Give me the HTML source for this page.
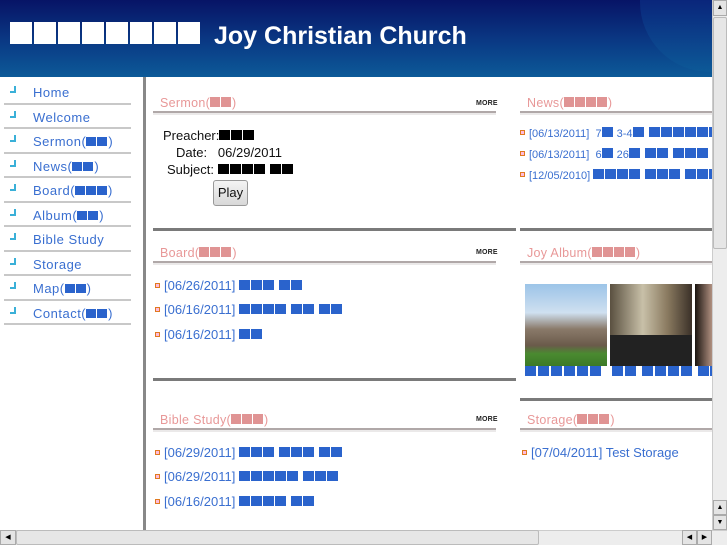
<!DOCTYPE html>
<html><head><meta charset="utf-8"><style>
*{margin:0;padding:0;box-sizing:border-box}
body{width:727px;height:545px;overflow:hidden;position:relative;background:#fff;font-family:"Liberation Sans",sans-serif}
.a{position:absolute}
i{display:inline-block;font-style:normal;vertical-align:baseline}
.b{width:11px;height:10px;background:#2a63cc;margin-right:1px}
.bs{width:10px;height:9px;background:#2a63cc;margin-right:1px}
.p{width:10px;height:10px;background:#e09494;margin-right:1px}
.k{width:11px;height:10px;background:#000;margin-right:1px}
.w{width:22px;height:22px;background:#fff;margin-right:2px}
.sp{width:4px}
#hdr{left:0;top:0;width:712px;height:77px;background:linear-gradient(#071466 0%,#0a3a85 55%,#0c5a98 100%)}
#moon{left:640px;top:0;width:72px;height:72px;background:linear-gradient(#0a2a80,#0d5a98);border-radius:0 0 0 70px;opacity:.8}
.nav{left:4px;width:127px;height:24.5px;border-bottom:2px solid #c8c8c8;font-size:13px;color:#3a6fd0;letter-spacing:.5px}
.nav span.ic{position:absolute;left:6px;top:6px;width:6px;height:7px;border-right:2px solid #3ab0d8;border-bottom:2px solid #3ab0d8}
.nav span.t{position:absolute;left:29px;top:5px}
.hd{font-size:12.5px;color:#e89898;letter-spacing:.3px}
.ln{height:4px;border-top:2px solid #b0a8a8;background:#ebe9e9}
.more{font-size:7px;font-weight:bold;color:#222;letter-spacing:.2px}
.sep{height:3px;background:#7a7a7a}
.it{font-size:13px;color:#3a6fd0;white-space:nowrap}
.its{font-size:11px;color:#3a6fd0;white-space:nowrap}
.bul{display:inline-block;width:5px;height:5px;border:1px solid #e07a20;background:#fbd;margin-right:4px;vertical-align:2px}
</style></head><body>
<div class="a" id="hdr"></div>
<div class="a" id="moon"></div>
<div class="a" style="left:10px;top:22px;white-space:nowrap"><i class="w"></i><i class="w"></i><i class="w"></i><i class="w"></i><i class="w"></i><i class="w"></i><i class="w"></i><i class="w"></i></div>
<div class="a" style="left:214px;top:22px;color:#fff;font-size:25px;font-weight:bold;white-space:nowrap">Joy Christian Church</div>

<div class="a nav" style="top:80px"><span class="ic"></span><span class="t">Home</span></div>
<div class="a nav" style="top:104.5px"><span class="ic"></span><span class="t">Welcome</span></div>
<div class="a nav" style="top:129px"><span class="ic"></span><span class="t">Sermon(<i class="bs"></i><i class="bs"></i>)</span></div>
<div class="a nav" style="top:153.5px"><span class="ic"></span><span class="t">News(<i class="bs"></i><i class="bs"></i>)</span></div>
<div class="a nav" style="top:178px"><span class="ic"></span><span class="t">Board(<i class="bs"></i><i class="bs"></i><i class="bs"></i>)</span></div>
<div class="a nav" style="top:202.5px"><span class="ic"></span><span class="t">Album(<i class="bs"></i><i class="bs"></i>)</span></div>
<div class="a nav" style="top:227px"><span class="ic"></span><span class="t">Bible Study</span></div>
<div class="a nav" style="top:251.5px"><span class="ic"></span><span class="t">Storage</span></div>
<div class="a nav" style="top:276px"><span class="ic"></span><span class="t">Map(<i class="bs"></i><i class="bs"></i>)</span></div>
<div class="a nav" style="top:300.5px"><span class="ic"></span><span class="t">Contact(<i class="bs"></i><i class="bs"></i>)</span></div>

<div class="a" style="left:143px;top:77px;width:3px;height:453px;background:#888"></div>

<div class="a hd" style="left:160px;top:96px">Sermon(<i class="p"></i><i class="p"></i>)</div>
<div class="a more" style="left:476px;top:100px">MORE</div>
<div class="a ln" style="left:153px;top:111px;width:343px"></div>
<div class="a" style="left:150px;top:127px;font-size:13px;color:#111;line-height:17px">
<div style="position:absolute;left:13px;top:0;white-space:nowrap">Preacher:<i class="k"></i><i class="k"></i><i class="k"></i></div>
<div style="position:absolute;left:26px;top:17px;white-space:nowrap">Date:&nbsp;&nbsp; 06/29/2011</div>
<div style="position:absolute;left:17px;top:34px;white-space:nowrap">Subject:&nbsp;<i class="k"></i><i class="k"></i><i class="k"></i><i class="k"></i><i class="sp"></i><i class="k"></i><i class="k"></i></div>
</div>
<div class="a" style="left:213px;top:180px;width:35px;height:26px;border:1px solid #999;border-radius:3px;background:linear-gradient(#f4f4f4,#d8d8d8);font-size:13px;text-align:center;line-height:24px;color:#111">Play</div>
<div class="a sep" style="left:153px;top:228px;width:363px"></div>

<div class="a hd" style="left:527px;top:96px">News(<i class="p"></i><i class="p"></i><i class="p"></i><i class="p"></i>)</div>
<div class="a ln" style="left:520px;top:111px;width:192px"></div>
<div class="a its" style="left:520px;top:127px"><span class="bul"></span>[06/13/2011]&nbsp; 7<i class="b"></i> 3-4<i class="b"></i><i class="sp"></i><i class="b"></i><i class="b"></i><i class="b"></i><i class="b"></i><i class="b"></i><i class="b"></i></div>
<div class="a its" style="left:520px;top:148px"><span class="bul"></span>[06/13/2011]&nbsp; 6<i class="b"></i> 26<i class="b"></i><i class="sp"></i><i class="b"></i><i class="b"></i><i class="sp"></i><i class="b"></i><i class="b"></i><i class="b"></i></div>
<div class="a its" style="left:520px;top:169px;width:192px;overflow:hidden"><span class="bul"></span>[12/05/2010]&nbsp;<i class="b"></i><i class="b"></i><i class="b"></i><i class="b"></i><i class="sp"></i><i class="b"></i><i class="b"></i><i class="b"></i><i class="sp"></i><i class="b"></i><i class="b"></i><i class="b"></i><i class="b"></i></div>
<div class="a sep" style="left:520px;top:228px;width:192px"></div>

<div class="a hd" style="left:160px;top:246px">Board(<i class="p"></i><i class="p"></i><i class="p"></i>)</div>
<div class="a more" style="left:476px;top:249px">MORE</div>
<div class="a ln" style="left:153px;top:261px;width:343px"></div>
<div class="a it" style="left:155px;top:278px"><span class="bul"></span>[06/26/2011] <i class="b"></i><i class="b"></i><i class="b"></i><i class="sp"></i><i class="b"></i><i class="b"></i></div>
<div class="a it" style="left:155px;top:302px"><span class="bul"></span>[06/16/2011] <i class="b"></i><i class="b"></i><i class="b"></i><i class="b"></i><i class="sp"></i><i class="b"></i><i class="b"></i><i class="sp"></i><i class="b"></i><i class="b"></i></div>
<div class="a it" style="left:155px;top:327px"><span class="bul"></span>[06/16/2011] <i class="b"></i><i class="b"></i></div>
<div class="a sep" style="left:153px;top:378px;width:363px"></div>

<div class="a hd" style="left:527px;top:246px">Joy Album(<i class="p"></i><i class="p"></i><i class="p"></i><i class="p"></i>)</div>
<div class="a ln" style="left:520px;top:261px;width:192px"></div>
<div class="a" style="left:525px;top:284px;width:82px;height:82px;background:linear-gradient(#9cc4e8 0%,#cfe0f0 35%,#8a7a6a 55%,#6a5a4a 75%,#4a8a30 85%,#3c7a28 100%)"></div>
<div class="a" style="left:610px;top:284px;width:82px;height:82px;background:linear-gradient(90deg,#5a5040,#c8c0a8 40%,#8a7a60 70%,#3a3028);"></div>
<div class="a" style="left:610px;top:335px;width:82px;height:31px;background:#222"></div>
<div class="a" style="left:695px;top:284px;width:17px;height:82px;background:linear-gradient(90deg,#1a1410,#b09080)"></div>
<div class="a" style="left:525px;top:366px;white-space:nowrap;width:187px;overflow:hidden;line-height:10px"><i class="b" style="margin-right:2px"></i><i class="b" style="margin-right:2px"></i><i class="b" style="margin-right:2px"></i><i class="b" style="margin-right:2px"></i><i class="b" style="margin-right:2px"></i><i class="b" style="margin-right:11px"></i><i class="b" style="margin-right:2px"></i><i class="b" style="margin-right:6px"></i><i class="b" style="margin-right:2px"></i><i class="b" style="margin-right:2px"></i><i class="b" style="margin-right:2px"></i><i class="b" style="margin-right:6px"></i><i class="b"></i><i class="b"></i></div>
<div class="a sep" style="left:520px;top:398px;width:192px"></div>

<div class="a hd" style="left:160px;top:413px">Bible Study(<i class="p"></i><i class="p"></i><i class="p"></i>)</div>
<div class="a more" style="left:476px;top:416px">MORE</div>
<div class="a ln" style="left:153px;top:428px;width:343px"></div>
<div class="a it" style="left:155px;top:445px"><span class="bul"></span>[06/29/2011] <i class="b"></i><i class="b"></i><i class="b"></i><i class="sp"></i><i class="b"></i><i class="b"></i><i class="b"></i><i class="sp"></i><i class="b"></i><i class="b"></i></div>
<div class="a it" style="left:155px;top:469px"><span class="bul"></span>[06/29/2011] <i class="b"></i><i class="b"></i><i class="b"></i><i class="b"></i><i class="b"></i><i class="sp"></i><i class="b"></i><i class="b"></i><i class="b"></i></div>
<div class="a it" style="left:155px;top:494px"><span class="bul"></span>[06/16/2011] <i class="b"></i><i class="b"></i><i class="b"></i><i class="b"></i><i class="sp"></i><i class="b"></i><i class="b"></i></div>

<div class="a hd" style="left:527px;top:413px">Storage(<i class="p"></i><i class="p"></i><i class="p"></i>)</div>
<div class="a ln" style="left:520px;top:428px;width:192px"></div>
<div class="a it" style="left:522px;top:445px"><span class="bul"></span>[07/04/2011] Test Storage</div>

<div class="a" style="left:712px;top:0;width:15px;height:530px;background:#ededed;border-left:1px solid #ccc"></div>
<div class="a" style="left:713px;top:0;width:14px;height:16px;background:#e4e4e4;border:1px solid #aaa;font-size:7px;text-align:center;line-height:14px">▲</div>
<div class="a" style="left:713px;top:17px;width:14px;height:232px;background:#e6e6e6;border:1px solid #bbb;border-radius:2px"></div>
<div class="a" style="left:713px;top:500px;width:14px;height:15px;background:#e4e4e4;border:1px solid #aaa;font-size:7px;text-align:center;line-height:13px">▲</div>
<div class="a" style="left:713px;top:515px;width:14px;height:15px;background:#e4e4e4;border:1px solid #aaa;font-size:7px;text-align:center;line-height:13px">▼</div>
<div class="a" style="left:0;top:530px;width:727px;height:15px;background:#ededed;border-top:1px solid #ccc"></div>
<div class="a" style="left:0;top:530px;width:16px;height:15px;background:#e4e4e4;border:1px solid #aaa;font-size:7px;text-align:center;line-height:13px">◀</div>
<div class="a" style="left:16px;top:530px;width:523px;height:15px;background:#e6e6e6;border:1px solid #bbb;border-radius:2px"></div>
<div class="a" style="left:682px;top:530px;width:15px;height:15px;background:#e4e4e4;border:1px solid #aaa;font-size:7px;text-align:center;line-height:13px">◀</div>
<div class="a" style="left:697px;top:530px;width:15px;height:15px;background:#e4e4e4;border:1px solid #aaa;font-size:7px;text-align:center;line-height:13px">▶</div>
</body></html>
